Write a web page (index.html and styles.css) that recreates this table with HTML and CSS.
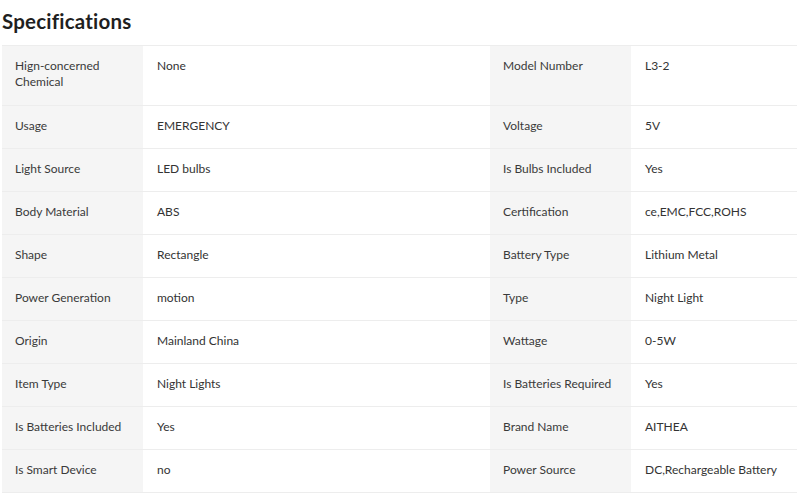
FILE: index.html
```html
<!DOCTYPE html>
<html>
<head>
<meta charset="utf-8">
<link rel="stylesheet" href="styles.css">
</head>
<body>
<div class="page">
  <h2 class="title">Specifications</h2>
  <table class="specs">
    <colgroup>
      <col class="c-label"><col class="c-value"><col class="c-label"><col class="c-value2">
    </colgroup>
    <tbody>
      <tr class="tall"><th>Hign-concerned Chemical</th><td>None</td><th>Model Number</th><td>L3-2</td></tr>
      <tr><th>Usage</th><td>EMERGENCY</td><th>Voltage</th><td>5V</td></tr>
      <tr><th>Light Source</th><td>LED bulbs</td><th>Is Bulbs Included</th><td>Yes</td></tr>
      <tr><th>Body Material</th><td>ABS</td><th>Certification</th><td>ce,EMC,FCC,ROHS</td></tr>
      <tr><th>Shape</th><td>Rectangle</td><th>Battery Type</th><td>Lithium Metal</td></tr>
      <tr><th>Power Generation</th><td>motion</td><th>Type</th><td>Night Light</td></tr>
      <tr><th>Origin</th><td>Mainland China</td><th>Wattage</th><td>0-5W</td></tr>
      <tr><th>Item Type</th><td>Night Lights</td><th>Is Batteries Required</th><td>Yes</td></tr>
      <tr><th>Is Batteries Included</th><td>Yes</td><th>Brand Name</th><td>AITHEA</td></tr>
      <tr><th>Is Smart Device</th><td>no</td><th>Power Source</th><td>DC,Rechargeable Battery</td></tr>
    </tbody>
  </table>
</div>
</body>
</html>
```
FILE: styles.css
```css
html, body {
  margin: 0;
  padding: 0;
  background: #ffffff;
}
.page {
  padding: 9px 1px 0 2px;
  font-family: Lato, "Open Sans", sans-serif;
  color: #333333;
}
.title {
  margin: 0 0 12px 0;
  font-size: 20.5px;
  line-height: 24px;
  font-weight: 700;
  letter-spacing: 0.2px;
  font-variant-ligatures: none;
  color: #1f1f1f;
}
.specs {
  width: 795px;
  border-collapse: collapse;
  table-layout: fixed;
  font-size: 12px;
  line-height: 16px;
}
.c-label { width: 141px; }
.c-value { width: 347px; }
.c-value2 { width: 166px; }
.specs tr {
  border-top: 1px solid #ededed;
  border-bottom: 1px solid #ededed;
  height: 43px;
}
.specs tr.tall { height: 60px; }
.specs th, .specs td {
  padding: 0 10px 2px 13px;
  text-align: left;
  font-weight: 400;
  vertical-align: middle;
}
.specs tr.tall th, .specs tr.tall td {
  vertical-align: top;
  padding-top: 12px;
  padding-bottom: 0;
}
.specs th {
  background: #f5f5f5;
  color: #3a3a3a;
}
.specs td {
  padding-left: 14px;
  color: #333333;
}
```
